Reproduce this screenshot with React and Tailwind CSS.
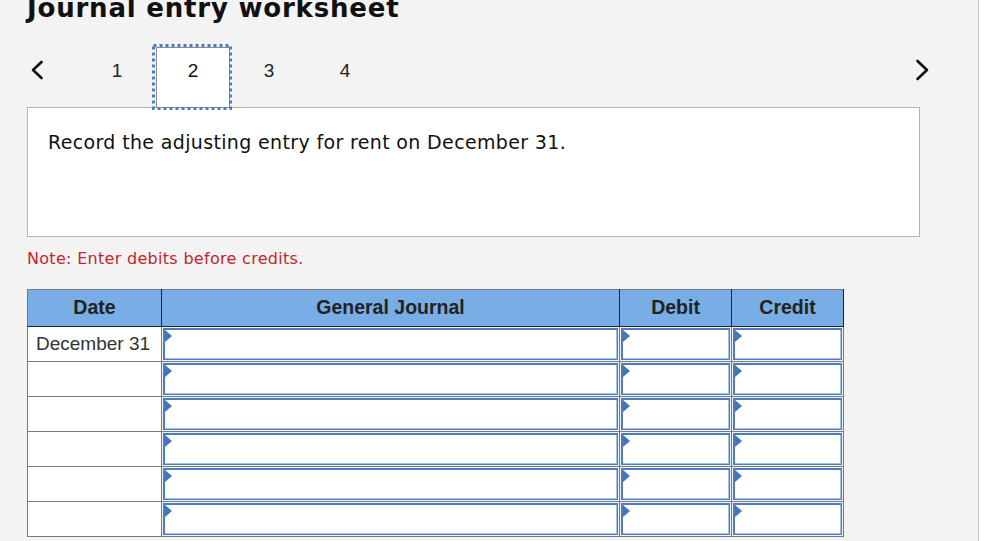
import React from "react";

const Chevron = ({ dir }) => (
  <svg width="18" height="24" viewBox="0 0 18 24" fill="none">
    {dir === "left" ? (
      <path d="M13.5 4 L5 12 L13.5 20" stroke="#111" strokeWidth="2.6" strokeLinecap="round" strokeLinejoin="round" />
    ) : (
      <path d="M4.5 3 L14 12 L4.5 21" stroke="#111" strokeWidth="2.6" strokeLinecap="round" strokeLinejoin="round" />
    )}
  </svg>
);

const InputCell = () => (
  <div className="relative h-[32px] m-[1px] bg-white border border-[#4a7ec0] shadow-[inset_1px_1px_0_0_#4a7ec0,inset_-1px_-1px_0_0_#9fc1ea]">
    <span className="absolute left-[1px] top-[1px] w-0 h-0 border-l-[7px] border-l-[#3f76bd] border-y-[6px] border-y-transparent" />
  </div>
);

export default function App() {
  const rows = ["December 31", "", "", "", "", ""];
  const numCls = "w-[76px] text-center text-[19px] leading-[22px] text-[#222] pt-[13px]";
  return (
    <div className="w-[1002px] h-[541px] overflow-hidden bg-white flex">
      <div className="w-[979px] h-full shrink-0 bg-[#f3f3f3] border-r border-[#c4c4c4] pl-[27px] flex flex-col">
        <h1
          className="shrink-0 mt-[-7px] h-[30px] text-[26px] font-bold text-[#111] leading-[30px] tracking-[0.8px] whitespace-nowrap"
          style={{ fontFamily: '"DejaVu Sans", Verdana, sans-serif' }}
        >
          Journal entry worksheet
        </h1>

        <div
          className="shrink-0 mt-[24px] w-[908px] flex items-start h-[61px] relative z-10"
          style={{ fontFamily: '"Liberation Sans", Arial, sans-serif' }}
        >
          <div className="w-[52px] pl-[1px] pt-[11px]">
            <Chevron dir="left" />
          </div>
          <div className={numCls}>1</div>
          <div className="w-[76px] h-[61px] relative flex justify-center">
            <div className="w-[74px] h-[61px] bg-white border border-[#8a8a8a] text-center text-[19px] leading-[22px] text-[#111] pt-[12px]">2</div>
            <svg className="absolute left-[-3px] top-[-3px]" width="80" height="66" viewBox="0 0 80 66">
              <rect x="1.5" y="1.5" width="77" height="63" fill="none" stroke="#4a7ec0" strokeWidth="3" strokeDasharray="3 3" />
            </svg>
          </div>
          <div className={numCls}>3</div>
          <div className={numCls}>4</div>
          <div className="flex-1" />
          <div className="w-[22px] pt-[11px]">
            <Chevron dir="right" />
          </div>
        </div>

        <div
          className="shrink-0 mt-[-1px] w-[893px] h-[130px] bg-white border border-[#b4b4b4] pl-[20px] pt-[23px] text-[19px] leading-[22px] tracking-[0.35px] text-[#111] whitespace-nowrap"
          style={{ fontFamily: '"DejaVu Sans", Verdana, sans-serif' }}
        >
          Record the adjusting entry for rent on December 31.
        </div>

        <div
          className="shrink-0 mt-[12px] text-[16px] text-[#c1272d] leading-[20px] tracking-[0.3px] whitespace-nowrap"
          style={{ fontFamily: '"DejaVu Sans", Verdana, sans-serif' }}
        >
          Note: Enter debits before credits.
        </div>

        <table
          className="shrink-0 mt-[20px] w-[816px] border-collapse table-fixed"
          style={{ fontFamily: '"Liberation Sans", Arial, sans-serif' }}
        >
          <colgroup>
            <col className="w-[134px]" />
            <col className="w-[458px]" />
            <col className="w-[112px]" />
            <col className="w-[112px]" />
          </colgroup>
          <thead>
            <tr className="h-[37px] bg-[#78ade5]">
              <th className="border-t border-l border-[#7a7a7a] border-b border-b-[#222] border-r border-r-[#222] text-[19.5px] font-bold text-[#222] text-center">Date</th>
              <th className="border-t border-[#7a7a7a] border-b border-b-[#222] border-r border-r-[#222] text-[19.5px] font-bold text-[#222] text-center">General Journal</th>
              <th className="border-t border-[#7a7a7a] border-b border-b-[#222] border-r border-r-[#222] text-[19.5px] font-bold text-[#222] text-center">Debit</th>
              <th className="border-t border-[#7a7a7a] border-b border-b-[#222] border-r border-r-[#222] text-[19.5px] font-bold text-[#222] text-center">Credit</th>
            </tr>
          </thead>
          <tbody>
            {rows.map((d, i) => (
              <tr key={i} className="h-[35px]">
                <td className="border border-[#7a7a7a] bg-white text-[19px] text-[#333] pl-[8px] p-0 whitespace-nowrap">{d}</td>
                <td className="border border-[#7a7a7a] p-0"><InputCell /></td>
                <td className="border border-[#7a7a7a] p-0"><InputCell /></td>
                <td className="border border-[#7a7a7a] p-0"><InputCell /></td>
              </tr>
            ))}
          </tbody>
        </table>
      </div>
    </div>
  );
}
